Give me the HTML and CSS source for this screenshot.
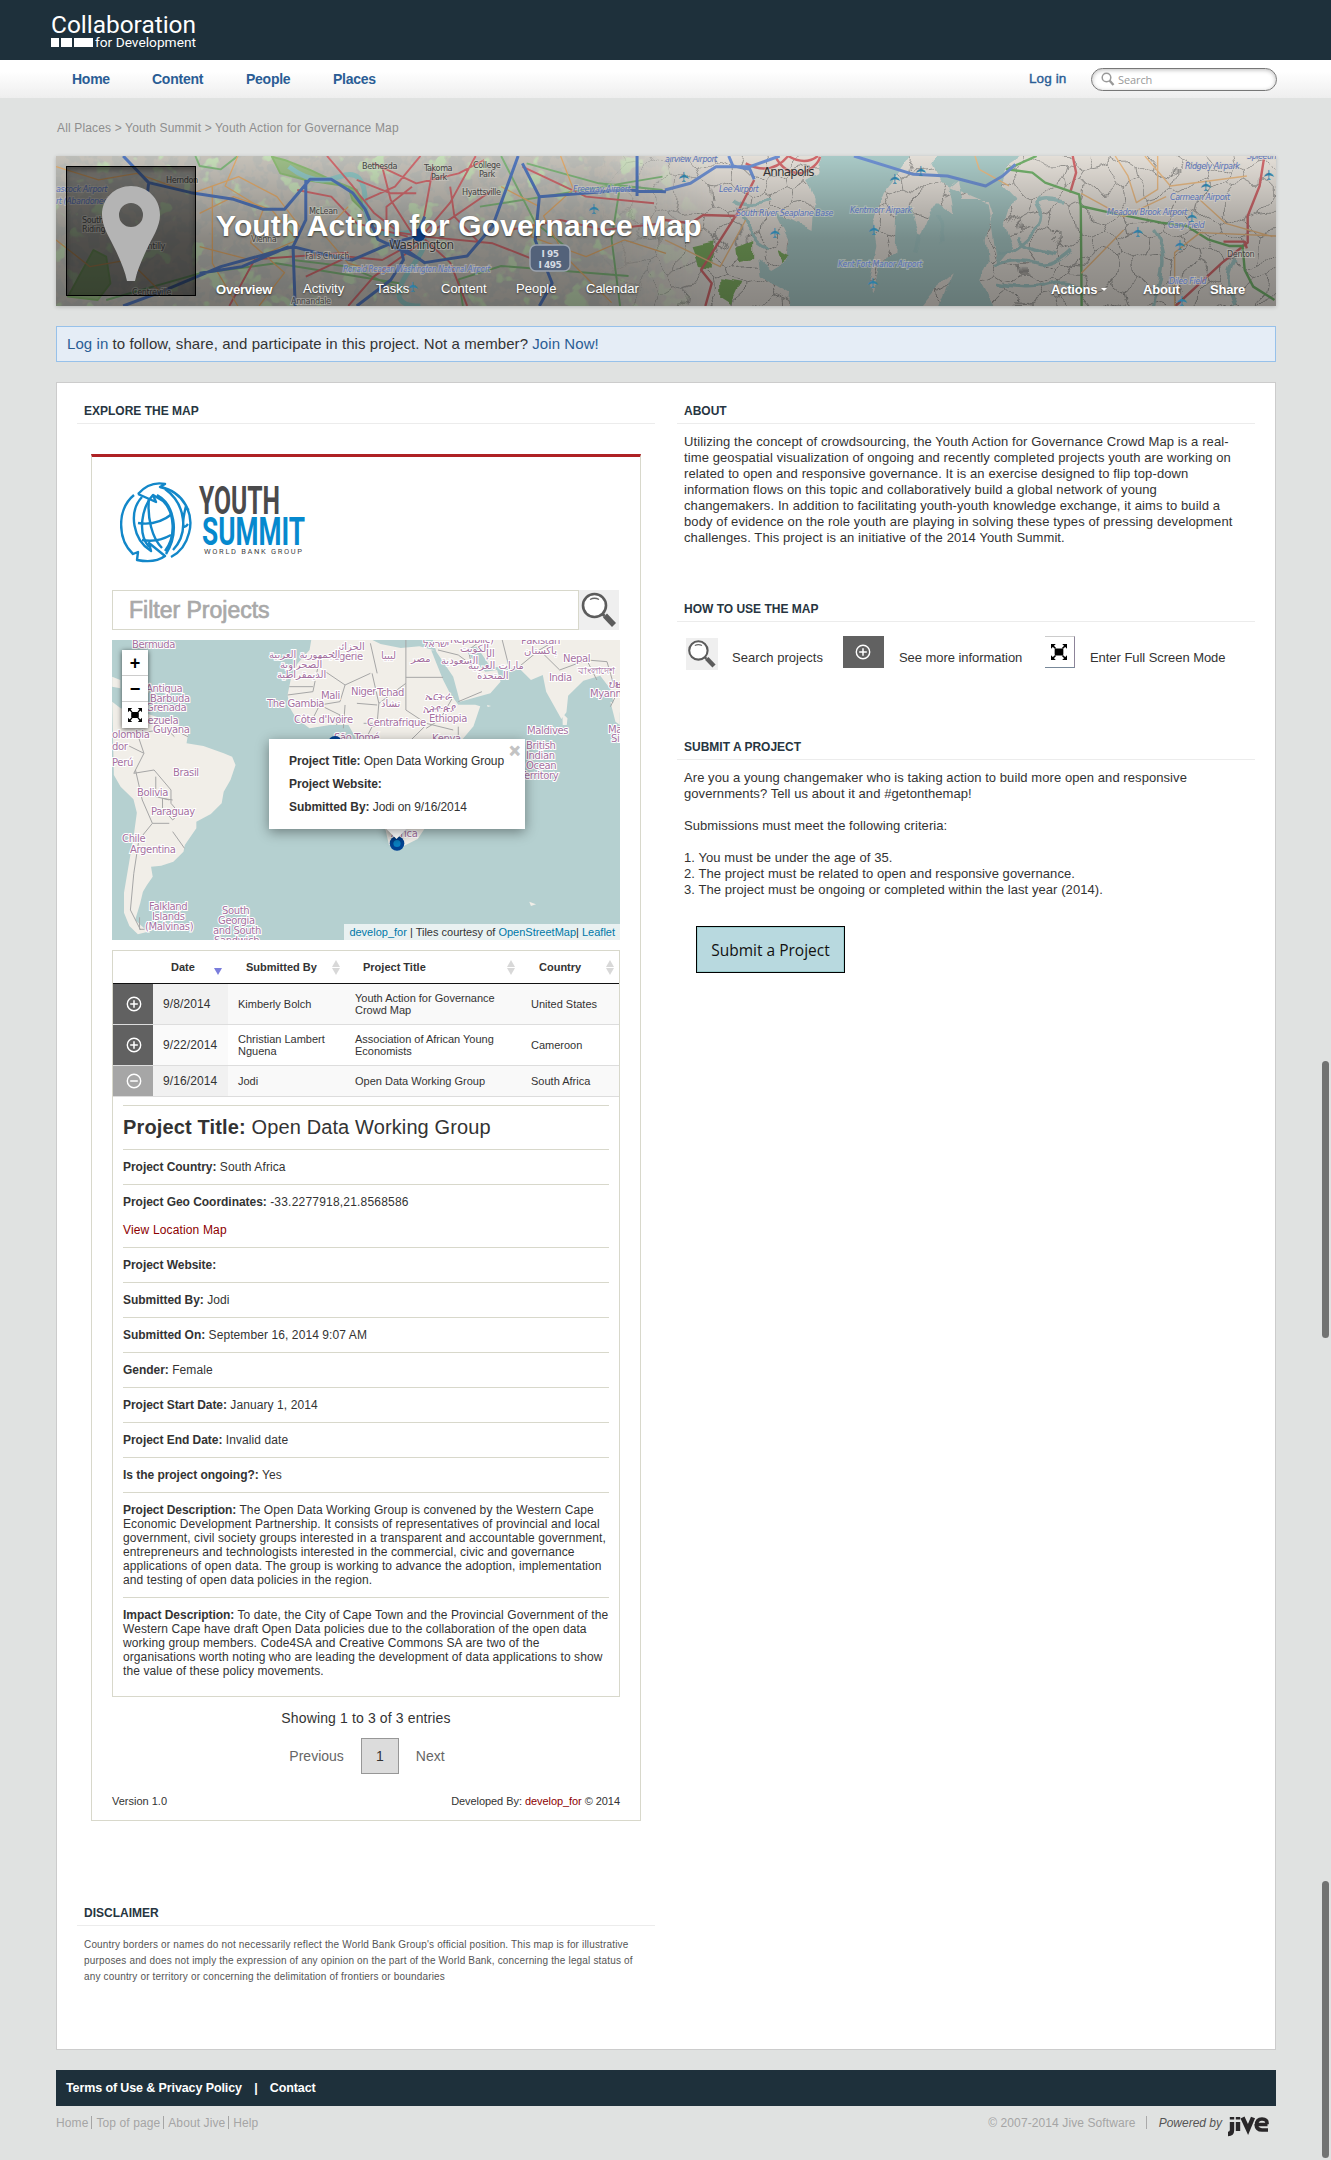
FILE: index.html
```html
<!DOCTYPE html>
<html lang="en">
<head>
<meta charset="utf-8">
<title>Youth Action for Governance Map</title>
<link rel="stylesheet" href="styles.css">
</head>
<body>
<svg class="defs" width="0" height="0">
  <defs>
    <symbol id="lens" viewBox="0 0 40 40">
      <rect width="40" height="40" fill="#efefef"/>
      <ellipse cx="15.5" cy="15.5" rx="11.5" ry="11.5" fill="#fff" stroke="#5c5c5c" stroke-width="2.6"/>
      <path d="M11 9.5q4.5-2.5 9 0" fill="none" stroke="#666" stroke-width="1.4"/>
      <path d="M23.5 24l2 2" stroke="#5c5c5c" stroke-width="3"/>
      <path d="M26 25.5l9 9.5" stroke="#5c5c5c" stroke-width="5.5"/>
    </symbol>
    <symbol id="full" viewBox="0 0 14 14">
      <rect x="3.200" y="4" width="7.600" height="6" rx="1"/>
      <path d="M0 0h4.200L0 4.200zM14 0H9.800L14 4.200zM0 14h4.200L0 9.800zM14 14H9.800L14 9.800z"/>
      <path d="M1 1l3 3M13 1l-3 3M1 13l3-3M13 13l-3-3" stroke="#000" stroke-width="1.300"/>
    </symbol>
    <symbol id="plus" viewBox="0 0 16 16">
      <circle cx="8" cy="8" r="6.700" fill="none" stroke="#fff" stroke-width="1.400"/>
      <path d="M4.200 8h7.600M8 4.200v7.600" stroke="#fff" stroke-width="1.500"/>
    </symbol>
    <symbol id="minus" viewBox="0 0 16 16">
      <circle cx="8" cy="8" r="6.700" fill="none" stroke="#fff" stroke-width="1.400"/>
      <path d="M4.200 8h7.600" stroke="#fff" stroke-width="1.500"/>
    </symbol>
  </defs>
</svg>

<header class="top">
  <svg width="146" height="38" viewBox="0 0 146 38" fill="#fff">
    <text x="0" y="20.500" font-family="Roboto" font-size="24" textLength="145" lengthAdjust="spacingAndGlyphs">Collaboration</text>
    <path d="M0 26h8v9H0zM10 26h11v9H10zM23 26h19v9H23z"/>
    <text x="44" y="34.500" font-family="Roboto" font-size="12.500" textLength="101" lengthAdjust="spacingAndGlyphs">for Development</text>
  </svg>
</header>
<nav class="nav">
  <a class="n1">Home</a><a class="n2">Content</a><a class="n3">People</a><a class="n4">Places</a>
  <a class="login">Log in</a>
  <div class="search">
    <svg width="14" height="14" viewBox="0 0 14 14" fill="none" stroke="#999"><circle cx="5.500" cy="5.500" r="4.300" stroke-width="1.500"/><path d="M8.500 8.500l4 4.500" stroke-width="2.400"/></svg>
    <span>Search</span>
  </div>
</nav>

<div class="page">
  <div class="crumbs">All Places &gt; Youth Summit &gt; Youth Action for Governance Map</div>

  <section class="banner">
    <svg class="banner-map" width="1220" height="150" viewBox="0 0 1220 150">
      <defs>
        <filter id="wobble" x="0" y="0" width="1" height="1"><feTurbulence type="fractalNoise" baseFrequency=".025" numOctaves="2" seed="4"/><feDisplacementMap in="SourceGraphic" scale="45" xChannelSelector="R" yChannelSelector="G"/></filter>
        <filter id="blocks" x="0" y="0" width="1" height="1"><feTurbulence type="fractalNoise" baseFrequency=".09" numOctaves="3" seed="9"/><feColorMatrix values="0 0 0 0 .5  0 0 0 0 .51  0 0 0 0 .48  9 0 0 0 -4.1"/></filter>
        <filter id="parks" x="0" y="0" width="1" height="1"><feTurbulence type="fractalNoise" baseFrequency=".045" numOctaves="3" seed="21"/><feColorMatrix values="0 0 0 0 .56  0 0 0 0 .72  0 0 0 0 .48  0 14 0 0 -8.6"/></filter>
        <filter id="bend" x="0" y="0" width="1" height="1"><feTurbulence type="fractalNoise" baseFrequency=".04" numOctaves="2" seed="7"/><feDisplacementMap in="SourceGraphic" scale="12" xChannelSelector="R" yChannelSelector="G"/></filter>
        <pattern id="streets" width="58" height="46" patternUnits="userSpaceOnUse">
          <path d="M0 10l12 4 8-6 14 9 10-5 14-2M12 14l-4 14 10 8 2 10M34 17l2 12 12 6 10-3M0 32l8-4M36 29l-14 8-4-1M44 12l3-12M20 8l-2-8M48 35l-1 11" fill="none" stroke="#9a9894" stroke-width="1"/>
        </pattern>
        <linearGradient id="shade" x1="0" y1="0" x2="0" y2="1"><stop offset="0" stop-color="#000" stop-opacity="0"/><stop offset=".55" stop-color="#000" stop-opacity=".3"/><stop offset="1" stop-color="#000" stop-opacity=".4"/></linearGradient>
        <linearGradient id="fade"><stop offset=".82" stop-color="#fff"/><stop offset="1" stop-color="#fff" stop-opacity="0"/></linearGradient>
        <mask id="m"><rect width="660" height="150" fill="url(#fade)"/></mask>
      </defs>
      <rect width="1220" height="150" fill="#e3ded7"/>
      <rect x="-30" y="-30" width="1280" height="210" fill="url(#streets)" filter="url(#wobble)"/>
      <g mask="url(#m)"><rect width="660" height="150" fill="#c5c1b9"/><rect width="660" height="150" filter="url(#blocks)"/><rect width="660" height="150" filter="url(#parks)"/></g>
      <!-- eastern half: bay, rivers, shore -->
      <g filter="url(#bend)">
      <rect width="1220" height="150" fill="none"/>
      <g transform="translate(609 -156) scale(.4247 .3333)">
        <path d="M370 448L360 520 330 540 350 600 345 690 300 660 260 640 290 720 290 780 250 810 220 780 225 830 290 880 285 938 590 938 640 860 680 820 640 938 780 938 740 840 760 780 755 720 770 640 760 600 700 600 690 540 670 560 680 640 640 600 620 640 600 710 575 620 545 640 540 760 500 800 490 880 478 860 500 740 490 660 515 580 550 520 590 448zM650 448h220l-60 50-20 60 30 40-20 80 20 60-40 60-20-190-110-60-20-50z" fill="#a9c9c6"/>
        <path d="M780 760q40 0 80-50t20-90 60-20M770 800q60-30 100-10t90-40M780 850q80 20 130 0t60 20M830 700q0 40 90 60M1340 780q-30 60 0 138M1150 690q30 50 20 120t-20 108M160 600q40 30 90 0M180 650q20 60 60 90M640 640l10 90M600 700l-10 60" fill="none" stroke="#a2c6c4" stroke-width="3.500" vector-effect="non-scaling-stroke"/>
        <path d="M65 745l50-15-10 70-25-5zM130 835l50 10-25 70-25-20zM170 740l40-20 0 60-35 10zM265 750l30 20-20 20z" fill="#7fae62"/>
      </g>
      </g>
      <g transform="translate(609 -156) scale(.4247 .3333)" fill="none" stroke-width="2.400" stroke-linejoin="round">
        <path vector-effect="non-scaling-stroke" stroke="#d0696c" d="M210 540L170 640 105 770 85 810 110 850 95 918M170 648L90 645 60 670 0 660M960 468l8 50-14 60M1410 478l-10 80-28 90 0 80-60 60-110 130M1315 725h50l5 20M190 490q60 40 100-22 40 30 70 0M260 470q20 50 60 50 40-20 45-50"/>
        <path vector-effect="non-scaling-stroke" stroke="#72b06b" d="M875 468l-70 40 60 10 30 30 80 35 4 35 2 300M978 618l70 20 120 30 60 10 50 40 50 20 35 0M1360 740l5 70 20 50 50 40"/>
        <path vector-effect="non-scaling-stroke" stroke="#e6b883" stroke-width="1.400" d="M730 468l10 40 70 50M1060 468l30 60 20 80 50-40 0-100M980 580l100 70 100-60M1200 918l0-160 60-60 180 10M980 820l100-130M0 720l130 80 60-140M1130 468l60 90 180-30M1260 600l60 70 110 40"/>
        <path vector-effect="non-scaling-stroke" stroke="#6d8fd0" stroke-width="3" d="M0 570l60-20 60-50 80 0 70-32M150 468l10 30 40 10 10 30M445 468l140 55 80 5 90 30 40-30 30-35"/>
      </g>
      <!-- western half: beltway and arterials -->
      <g transform="translate(-56 -156) scale(.4247 .3333)" fill="none" stroke-width="1.900" stroke-linejoin="round">
        <path stroke="#8cba74" fill="#9dbd88" vector-effect="non-scaling-stroke" d="M640 470l20 50 60 20 100 20 10 40 40 50-30-80-60-30-50-30-60-30zM160 890l60-140 30 20 10 80-30 50z"/>
        <path stroke="#8fc4c2" vector-effect="non-scaling-stroke" stroke-width="5" d="M680 500q60 60 120 30t60 80 90 90 20 100 20 118"/>
        <g stroke="#7fb57a"><path vector-effect="non-scaling-stroke" d="M460 468l10 30 50 10 40-40M690 780l130 20 110 60M1090 918l-10-80 100-40 300 30M250 900l220-80 180-30 290 60M1180 468l80 200 80 80M1240 490l170 60 150 20M1460 918l-20-200 20-160M1130 620l150-30 280-60"/></g>
        <g stroke="#d06a6e"><path vector-effect="non-scaling-stroke" d="M770 468l60 90 50 80 60 60 50 10M860 600l70-40 60-92M900 500l20 100 50 100M840 540l80 40 60 0M1020 500l-30 210M1120 468l-60 140-60 90M1160 570l-160 140 160 20 120 60M1000 710l-100 70-80-10-100 60M1100 918l-40-130-60-70M970 560l-60 60 0 60M1060 560l10 90 60 80M700 570l80 20 60 80 120 40M540 918l60-140 220-20M990 730l-110 100-60 88M880 490l100 60 100-30 60-40M1200 690l120-30 100 30 140-20M1230 500l150 90 160 20"/></g>
        <g stroke="#e2ab6c" stroke-width="1.300"><path vector-effect="non-scaling-stroke" d="M132 500l100 40 90-20 130 60 110-50 90 60 60 100M470 640l80-50 90 40 60 90-110 60-120-40M132 720l80 80 90-20 80 100M560 468l-30 90 90 70-30 100 80 90-60 100M1180 560l90 60-20 90 130 60 90-50 98 40M1320 468l30 100-70 80 50 120 110 140M500 560l0 230 60 128M820 620l-60 80 60 90 90 30"/></g>
        <g stroke="#5277bc" stroke-width="3"><path vector-effect="non-scaling-stroke" d="M290 468l60 80 100 30 100 20 70 30 50 0 60-90 50 0 50 40 30 50 30 90 100 60M720 540l0 120-30 80 5 178M690 740l60 20 80 20 90-50 60-20 20-60M470 820l100-20 110-60M350 548l-10 120-20 150M1220 468l-60 210-60 90-100 20-80-70M1230 490l40 100 200-20 98 5M1270 590l-10 130 40 130-30 68M690 740l-170 60-150 80-80 38M940 720l10 60-30 60-80 78M1500 468v120"/></g>
      </g>
      <rect width="1220" height="150" fill="url(#shade)"/>
      <g class="b-city">
        <text x="306" y="13">Bethesda</text><text x="368" y="15">Takoma</text><text x="375" y="24">Park</text><text x="417" y="12">College</text><text x="423" y="21">Park</text><text x="406" y="39">Hyattsville</text><text x="253" y="58">McLean</text><text x="195" y="86">Vienna</text><text x="249" y="103">Falls Church</text><text x="235" y="148">Annandale</text><text x="110" y="27">Herndon</text><text x="26" y="67">South</text><text x="26" y="76">Riding</text><text x="77" y="93">Chantilly</text><text x="76" y="139">Centreville</text><text x="1171" y="101">Denton</text>
      </g>
      <g class="b-big"><text x="333" y="93">Washington</text><text x="707" y="20" textLength="51">Annapolis</text></g>
      <g class="b-air"><text x="609" y="6">airview Airport</text><text x="663" y="36">Lee Airport</text><text x="680" y="60">South River Seaplane Base</text><text x="794" y="57">Kentmorr Airpark</text><text x="782" y="111">Kent Fort Manor Airport</text><text x="1129" y="13">Ridgely Airpark</text><text x="1114" y="44">Carmean Airport</text><text x="1051" y="59">Meadow Brook Airport</text><text x="1112" y="72">Gary Field</text><text x="1113" y="128">Dileo Field</text><text x="1191" y="3">Spleeting</text><text x="517" y="36">Freeway Airport</text><text x="287" y="116" textLength="147">Ronald Reagan Washington National Airport</text><text x="0" y="36">ascock Airport</text><text x="0" y="48">rt (Abandoned)</text></g>
      <g class="b-plane"><text transform="translate(633 21) rotate(-90)">✈</text><text transform="translate(724 77) rotate(-90)">✈</text><text transform="translate(823 74) rotate(-90)">✈</text><text transform="translate(844 23) rotate(-90)">✈</text><text transform="translate(870 15) rotate(-90)">✈</text><text transform="translate(822 127) rotate(-90)">✈</text><text transform="translate(1155 30) rotate(-90)">✈</text><text transform="translate(1141 61) rotate(-90)">✈</text><text transform="translate(1087 76) rotate(-90)">✈</text><text transform="translate(1129 89) rotate(-90)">✈</text><text transform="translate(1131 145) rotate(-90)">✈</text><text transform="translate(1218 19) rotate(-90)">✈</text><text transform="translate(543 53) rotate(-90)">✈</text><text transform="translate(362 131) rotate(-90)">✈</text></g>
      <circle cx="363" cy="79" r="6.500" fill="#0d3a7c"/>
      <rect x="474" y="89" width="40" height="26" rx="6" fill="#53627a" stroke="#9ba3ae" stroke-width="1.500"/>
      <text class="b-shield" x="494" y="101">I 95</text><text class="b-shield" x="494" y="112">I 495</text>
    </svg>
    <div class="avatar">
      <svg width="58" height="95" viewBox="0 0 58 95"><path fill="#b4b4b4" fill-rule="evenodd" d="M29 0C13 0 0 12 0 29c0 12 8 23 14 36 5 11 9 20 11 30h8c2-10 6-19 11-30 6-13 14-24 14-36C58 12 45 0 29 0zM29 17a12 12 0 1 1 0 24a12 12 0 1 1 0-24z"/></svg>
    </div>
    <div class="banner-text">
      <h1>Youth Action for Governance Map</h1>
      <div class="tabs">
        <b class="t1">Overview</b><span class="t2">Activity</span><span class="t3">Tasks</span><span class="t4">Content</span><span class="t5">People</span><span class="t6">Calendar</span>
        <b class="t7">Actions <i class="caret"></i></b><b class="t8">About</b><b class="t9">Share</b>
      </div>
    </div>
  </section>

  <div class="notice"><a>Log in</a> to follow, share, and participate in this project. Not a member? <a>Join Now!</a></div>

  <main class="main">
    <div class="col left">
      <section class="explore">
        <h2>Explore the map</h2>
        <div class="app">
          <svg class="logo" width="188" height="82" viewBox="0 0 188 82">
            <g fill="none" stroke="#1287c9" stroke-width="2.400" stroke-linejoin="round">
              <path d="M14 13C-3 27-3 57 13 72l5-2-1 8c10 2 20 2 28-4l-16-13 2 8C13 58 8 30 22 15"/>
              <path d="M18 12C26 3 35 0 45 2l-5 3c25 5 34 28 29 46-3 12-10 20-18 24"/>
              <path d="M18 12l18 8-3-7c-11 12-16 38-4 52"/>
              <path d="M37 13c17 9 23 37 9 59M33 13l10 6c12 12 13 36 2 50M29 16c-2 20 3 40 13 50"/>
              <path d="M45 7c21 15 24 44 8 61M66 24c-4 16-4 26 2 18M69 28l-4-2M18 41c12 2 24-1 34-9M22 58c10 2 20 0 29-5"/>
            </g>
            <g font-family="Roboto" font-weight="700">
              <text x="79" y="32" font-size="38" textLength="81" lengthAdjust="spacingAndGlyphs" fill="#4a4a4c">YOUTH</text>
              <text x="82" y="63" font-size="39" textLength="103" lengthAdjust="spacingAndGlyphs" fill="#0689ce">SUMMIT</text>
              <text x="84" y="71.500" font-size="7.500" font-weight="400" textLength="98" fill="#444">WORLD BANK GROUP</text>
            </g>
          </svg>
          <div class="filter"><div class="filter-input">Filter Projects</div><svg width="40" height="40"><use href="#lens"/></svg></div>

          <div class="map">
            <svg class="world" width="508" height="300" viewBox="0 0 508 300">
              <g transform="translate(-12 -10) scale(.338 .3333)" fill="#f1eee8">
                <path d="M36 215l25 20 60 10 60 20 60 25 20 20-5 30 50 8 60 22 25 10 10 25-15 45-20 35-6 35-32 32-43 23 0 20-34 50-4 20-30 30-36 12-30 3 5 30-17 25-12 20-8 35-15 50 38 35-30 8-25-25-16-40 0-60 15-90 15-90 8-60-10-40-38-38-20-35z"/>
                <path d="M625 30l-5 30-35 40-20 45-10 50 5 35 20 35 40 30 60-10 55 0 25 45 40 30v200l45 40 10 45 45 2 40-20 25-38 0-240 90 0 50-60 20-60-15-5-50 0-25-35-20-40-20-50-15-38 10 0-45-12-55 5-60-12-40-20z"/>
                <path d="M985 30l10 35 50 75 20 75 90-25 30-35-10-35-35 5-40-40-20-30 35-5 40 60 85 5 35 35 35-15 10 50 45 82 15-20 5-50 45-45 50-15 30 40 10 45 20 30 8-20V30z"/>
                <path d="M1368 250l15 15-2 20-12 0zM1510 215l15 60 13 10v-60z"/>
                <path d="M36 170l24 5v-25l-24-10zM1270 815l20 8-15 5zM1145 225l12 3-10 3zM130 895l25-5-8-10z"/>
                <g fill="none" stroke="#a6a6a6" stroke-width="1" ><path vector-effect="non-scaling-stroke" d="M645 110l-15 75-75 10M645 110l80 55 75-35M725 165l-15 50-60 10-20 40M905 30v130l-80 60-20-90M905 142h110M800 40l20 90M825 220l-5 60-40 0M905 160v80l60 40 80 20M725 225l-5 70M905 270l-100 20-20 40M1045 200l-40 70-40 25M1240 110l60-50 50-30M1300 60l60 60 80-30 60 5 20 70M1440 90l30 60M1000 60l60 15 40 30M1060 215l70-30M1510 230l20-40"/>
                <path vector-effect="non-scaling-stroke" d="M80 345l50 25-30 60 60-10 50 60 0 40 25 30-20 20-30-35 0-30 30 5M105 420l20 90 30 70-40 50-15 100-10 110 30 60M155 580l50 0M215 605l35 50M130 370l-20-60 100-15 50 25M200 300l20 20M117 862v36h15M1100 110l-10-50 40-30M1190 30l20 80M165 440l0 60 40 10M560 170h70M650 225l60 30-10 30M760 220l60 5M960 290l-40 40M1060 290v30"/></g>
              </g>
              <g class="country">
                <text x="20" y="8">Bermuda</text><text x="34" y="52">Antigua</text><text x="38" y="62">Barbuda</text><text x="34" y="71">Grenada</text><text x="18" y="84">Venezuela</text><text x="41" y="93">Guyana</text><text x="0" y="98">olombia</text><text x="0" y="110">dor</text><text x="0" y="126">Perú</text><text x="61" y="136">Brasil</text><text x="25" y="156">Bolivia</text><text x="39" y="175">Paraguay</text><text x="10" y="202">Chile</text><text x="18" y="213">Argentina</text>
                <text x="37" y="270">Falkland</text><text x="40" y="280">Islands</text><text x="33" y="290">(Malvinas)</text><text x="110" y="274">South</text><text x="106" y="284">Georgia</text><text x="101" y="294">and South</text><text x="102" y="304">Sandwich</text>
                <text x="218" y="20">Algérie</text><text x="224" y="10" direction="rtl" text-anchor="end">الجزائر</text><text x="157" y="18" direction="rtl" text-anchor="end">الجمهورية العربية</text><text x="168" y="28" direction="rtl" text-anchor="end">الصحراوية</text><text x="165" y="38" direction="rtl" text-anchor="end">الديمقراطية</text><text x="269" y="19" direction="rtl" text-anchor="end">ليبيا</text><text x="299" y="22" direction="rtl" text-anchor="end">مصر</text><text x="329" y="24" direction="rtl" text-anchor="end">السعودية</text><text x="348" y="12" direction="rtl" text-anchor="end">الكويت</text><text x="356" y="29" direction="rtl" text-anchor="end">مارات العربية</text><text x="374" y="17" direction="rtl" text-anchor="end">الإ</text><text x="365" y="39" direction="rtl" text-anchor="end">المتحدة</text><text x="412" y="14" direction="rtl" text-anchor="end">پاکستان</text>
                <text x="311" y="7">ישראל</text><text x="338" y="3">Republic)</text><text x="409" y="4">Pakistan</text><text x="451" y="22">Nepal</text><text x="466" y="34">বাংলাদেশ</text><text x="437" y="41">India</text><text x="497" y="48">ປະ</text><text x="478" y="57">Myanmar</text>
                <text x="209" y="59">Mali</text><text x="239" y="55">Niger</text><text x="265" y="56">Tchad</text><text x="269" y="67" direction="rtl" text-anchor="end">تشاد</text><text x="155" y="67">The Gambia</text><text x="182" y="83">Côte d'Ivoire</text><text x="255" y="86">Centrafrique</text><text x="222" y="101">São Tomé</text><text x="320" y="102">Kenya</text><text x="313" y="60">ኤርትራ</text><text x="311" y="72">ኢትዮጵያ</text><text x="317" y="82">Ethiopia</text>
                <text x="415" y="94">Maldives</text><text x="414" y="109">British</text><text x="414" y="119">Indian</text><text x="414" y="129">Ocean</text><text x="408" y="139">Territory</text><text x="496" y="93">Ma</text><text x="499" y="102">Sin</text><text x="279" y="197">Africa</text>
              </g>
              <circle cx="223" cy="103" r="7" fill="#004393"/>
              <circle cx="285" cy="203.500" r="7.300" fill="#004393"/><circle cx="285" cy="203.500" r="3.600" fill="#0a82c4"/>
            </svg>
            <div class="zoomer"><span>+</span><span>−</span><span><svg width="14" height="14"><use href="#full"/></svg></span></div>
            <div class="popup"><i class="tip"></i><div class="popup-box"><em>×</em><p><b>Project Title:</b> Open Data Working Group</p><p><b>Project Website:</b></p><p><b>Submitted By:</b> Jodi on 9/16/2014</p></div></div>
            <div class="attr"><a>develop_for</a> | Tiles courtesy of <a>OpenStreetMap</a>| <a>Leaflet</a></div>
          </div>

          <div class="table">
            <div class="row head"><span></span><span>Date<i class="desc"></i></span><span>Submitted By<i class="sort"></i></span><span>Project Title<i class="sort"></i></span><span>Country<i class="sort"></i></span></div>
            <div class="row odd"><span class="ic"><svg width="16" height="16"><use href="#plus"/></svg></span><span class="date">9/8/2014</span><span>Kimberly Bolch</span><span>Youth Action for Governance<br>Crowd Map</span><span>United States</span></div>
            <div class="row"><span class="ic"><svg width="16" height="16"><use href="#plus"/></svg></span><span class="date">9/22/2014</span><span>Christian Lambert<br>Nguena</span><span>Association of African Young<br>Economists</span><span>Cameroon</span></div>
            <div class="row odd short"><span class="ic open"><svg width="16" height="16"><use href="#minus"/></svg></span><span class="date">9/16/2014</span><span>Jodi</span><span>Open Data Working Group</span><span>South Africa</span></div>
            <div class="details">
              <h3><b>Project Title:</b> Open Data Working Group</h3>
              <p><b>Project Country:</b> South Africa</p>
              <p><b>Project Geo Coordinates:</b> <span class="geo">-33.2277918,21.8568586</span><a>View Location Map</a></p>
              <p><b>Project Website:</b></p>
              <p><b>Submitted By:</b> Jodi</p>
              <p><b>Submitted On:</b> September 16, 2014 9:07 AM</p>
              <p><b>Gender:</b> Female</p>
              <p><b>Project Start Date:</b> January 1, 2014</p>
              <p><b>Project End Date:</b> Invalid date</p>
              <p><b>Is the project ongoing?:</b> Yes</p>
              <p><b>Project Description:</b> The Open Data Working Group is convened by the Western Cape<br>Economic Development Partnership. It consists of representatives of provincial and local<br>government, civil society groups interested in a transparent and accountable government,<br>entrepreneurs and technologists interested in the commercial, civic and governance<br>applications of open data. The group is working to advance the adoption, implementation<br>and testing of open data policies in the region.</p>
              <p><b>Impact Description:</b> To date, the City of Cape Town and the Provincial Government of the<br>Western Cape have draft Open Data policies due to the collaboration of the open data<br>working group members. Code4SA and Creative Commons SA are two of the<br>organisations worth noting who are leading the development of data applications to show<br>the value of these policy movements.</p>
            </div>
          </div>
          <div class="info">Showing 1 to 3 of 3 entries</div>
          <div class="pager"><span>Previous</span><b>1</b><span>Next</span></div>
          <div class="credits"><span>Version 1.0</span><span>Developed By: <a>develop_for</a> © 2014</span></div>
        </div>
      </section>
      <section class="disclaimer">
        <h2>Disclaimer</h2>
        <p>Country borders or names do not necessarily reflect the World Bank Group's official position. This map is for illustrative<br>purposes and does not imply the expression of any opinion on the part of the World Bank, concerning the legal status of<br>any country or territory or concerning the delimitation of frontiers or boundaries</p>
      </section>
    </div>

    <div class="col right">
      <section class="about">
        <h2>About</h2>
        <p>Utilizing the concept of crowdsourcing, the Youth Action for Governance Crowd Map is a real-<br>time geospatial visualization of ongoing and recently completed projects youth are working on<br>related to open and responsive governance. It is an exercise designed to flip top-down<br>information flows on this topic and collaboratively build a global network of young<br>changemakers. In addition to facilitating youth-youth knowledge exchange, it aims to build a<br>body of evidence on the role youth are playing in solving these types of pressing development<br>challenges. This project is an initiative of the 2014 Youth Summit.</p>
      </section>
      <section class="howto">
        <h2>How to use the map</h2>
        <div class="keys">
          <svg class="k-lens" width="32" height="32"><use href="#lens"/></svg><span class="k1">Search projects</span>
          <span class="k-plus"><svg width="16" height="16"><use href="#plus"/></svg></span><span class="k2">See more information</span>
          <span class="k-full"><svg width="16" height="16"><use href="#full"/></svg></span><span>Enter Full Screen Mode</span>
        </div>
      </section>
      <section class="submit">
        <h2>Submit a project</h2>
        <p>Are you a young changemaker who is taking action to build more open and responsive<br>governments? Tell us about it and #getonthemap!<br><br>Submissions must meet the following criteria:<br><br>1. You must be under the age of 35.<br>2. The project must be related to open and responsive governance.<br>3. The project must be ongoing or completed within the last year (2014).</p>
        <a class="button">Submit a Project</a>
      </section>
    </div>
  </main>

  <div class="legal"><span>Terms of Use &amp; Privacy Policy</span><span class="bar">|</span><span>Contact</span></div>
  <footer class="foot">
    <div class="links">Home<i></i>Top of page<i></i>About Jive<i></i>Help</div>
    <div class="copy">© 2007-2014 Jive Software</div><i class="sep"></i><em>Powered by</em>
    <svg width="41" height="21" viewBox="0 0 41 21" fill="none" stroke="#292729" stroke-width="4.400"><path d="M4 6v8q0 4-4 4M10 6v9M10 1v2.500M4 1v2.500"/><path d="M14.500 1.500l5.500 12 5-12"/><path d="M39.500 8.500H28.500M28.500 9q0-6 5.500-6t5 5M28 8q.500 6 6 6h6" stroke-width="3.600"/></svg>
  </footer>
</div>
<i class="scroll s1"></i><i class="scroll s2"></i>
</body>
</html>
```

FILE: styles.css
```css
* { box-sizing: border-box; }
body { margin: 0; position: relative; height: 2160px; overflow: hidden; background: #e0e2e1; font-family: "Liberation Sans", Arial, sans-serif; font-size: 13px; color: #333; }
h1, h2, h3, p { margin: 0; font-weight: normal; }
i, em { font-style: normal; }
.defs { display: block; position: absolute; }
.top { height: 60px; padding: 12px 0 0 51px; background: #1e303b; }
.top svg { display: block; }
.nav { height: 38px; padding-left: 72px; display: flex; align-items: center; background: linear-gradient(#fff 30%, #eee); color: #315e91; font-weight: bold; font-size: 14px; letter-spacing: -.25px; }
.nav a { padding-bottom: 1px; }
.n1 { width: 80px; } .n2 { width: 94px; } .n3 { width: 87px; }
.login { margin-left: auto; width: 62px; font-size: 13.5px; font-weight: normal; letter-spacing: .1px; -webkit-text-stroke: .4px; }
.search { width: 186px; height: 23px; margin-right: 54px; border: 1px solid #777; border-radius: 12px; background: #fff; box-shadow: inset 0 1px 4px #bbb; display: flex; align-items: center; gap: 3px; padding-left: 9px; color: #999; font: 11px "Open Sans", sans-serif; letter-spacing: -.1px; }
.page { width: 1220px; margin-left: 56px; }
.crumbs { height: 58px; padding: 22px 0 0 1px; font-size: 12px; line-height: 16px; letter-spacing: .15px; color: #8e8e8e; }
.banner { position: relative; height: 150px; display: flex; padding: 10px; box-shadow: 0 1px 4px rgba(0,0,0,.2); color: #fff; text-shadow: 0 1px 2px rgba(0,0,0,.6); }
.banner-map { position: absolute; inset: 0; text-shadow: none; }
.b-city, .b-big, .b-air { stroke: rgba(215,212,205,.4); stroke-width: 2px; paint-order: stroke; }
.b-city { font: 9px "DejaVu Sans Condensed", "DejaVu Sans"; fill: #444; letter-spacing: -.4px; }
.b-big { font: 12px "DejaVu Sans"; fill: #333; letter-spacing: -.6px; }
.b-air { font: italic 8px "DejaVu Sans"; fill: #5872b8; letter-spacing: -.45px; }
.b-plane { font: 14px "DejaVu Sans"; fill: #2e7fa6; text-anchor: middle; }
.b-shield { font: bold 9px "DejaVu Sans"; fill: #d5dae2; text-anchor: middle; letter-spacing: -.5px; }
.avatar { position: relative; width: 130px; height: 130px; flex: none; border: 1px solid #000; background: rgba(0,0,0,.42); padding: 19px 0 0 35px; box-shadow: inset 0 3px 5px rgba(0,0,0,.35); }
.banner-text { position: relative; flex: 1; padding: 42px 0 0 20px; }
h1 { font-size: 30px; font-weight: bold; line-height: 36px; letter-spacing: .13px; white-space: nowrap; }
.tabs { display: flex; padding-top: 36px; line-height: 18px; white-space: nowrap; }
.t1 { width: 87px; padding-top: 1px; } .t2 { width: 73px; } .t3 { width: 65px; } .t4 { width: 75px; } .t5 { width: 70px; }
.t7 { margin-left: auto; width: 92px; } .t8 { width: 67px; } .t9 { width: 56px; }
.t1, .t7, .t8, .t9 { padding-top: 1px; letter-spacing: -.2px; }
.caret { display: inline-block; border: 3px solid transparent; border-top-color: #fff; border-bottom: 0; vertical-align: 3px; }
.notice { height: 36px; margin-top: 20px; padding-left: 10px; border: 1px solid #97c1ea; background: #e5edf6; color: #333; font-size: 15px; letter-spacing: .07px; line-height: 33px; }
a { color: #2a5d95; text-decoration: none; }
.main { height: 1668px; margin-top: 20px; border: 1px solid #ccc; background: #fff; display: grid; grid-template-columns: 578px 578px; column-gap: 22px; padding: 20px 0 0 20px; }
h2 { height: 21px; padding-left: 7px; border-bottom: 1px solid #ececec; font-size: 12px; line-height: 16px; font-weight: bold; text-transform: uppercase; color: #273541; }
.explore { height: 1502px; }
.app { width: 550px; height: 1367px; margin: 30px 0 0 14px; border: 1px solid #d8d8cb; border-top: 3px solid #ae2124; padding: 25px 20px 0; }
.logo { display: block; margin-left: 8px; }
.filter { display: flex; margin-top: 26px; height: 40px; }
.filter-input { width: 467px; border: 1px solid #d8d8cb; padding-left: 16px; font-size: 23px; line-height: 38px; color: #a9a9a9; -webkit-text-stroke: .7px; }
.map { position: relative; height: 300px; margin-top: 10px; overflow: hidden; background: #b5d0d0; font-size: 12px; }
.world { display: block; }
.country { font: 10px "DejaVu Sans"; fill: #a5719f; stroke: #fff; stroke-width: 2px; paint-order: stroke; letter-spacing: -.35px; }
.zoomer { position: absolute; left: 10px; top: 10px; width: 26px; background: #fff; box-shadow: 0 1px 5px rgba(0,0,0,.65); font: bold 18px/27px "Liberation Sans"; color: #000; text-align: center; }
.zoomer span { display: block; height: 26px; border-bottom: 1px solid #ccc; }
.zoomer span:last-child { border: 0; }
.zoomer svg { margin-top: 6px; display: inline-block; vertical-align: top; }
.popup { position: absolute; left: 157px; top: 99px; width: 256px; }
.popup-box { position: relative; height: 90px; padding: 15px 20px; background: #fff; box-shadow: 0 3px 12px rgba(0,0,0,.4); letter-spacing: -.07px; }
.popup-box p { line-height: 15px; margin-bottom: 8px; white-space: nowrap; }
.popup-box em { position: absolute; right: 5px; top: 2px; font: bold 18px/20px "Liberation Sans"; color: #c3c3c3; -webkit-text-stroke: 1px; }
.tip { position: absolute; left: 120px; top: 82px; width: 15px; height: 15px; background: #fff; transform: rotate(45deg); box-shadow: 0 3px 8px rgba(0,0,0,.4); }
.attr { position: absolute; right: 0; bottom: 0; height: 16px; padding: 0 5px; line-height: 16px; background: rgba(255,255,255,.7); font-size: 11px; white-space: nowrap; }
.attr a { color: #0078a8; }
.table { height: 747px; margin-top: 10px; border: 1px solid #d8d8cb; }
.row { display: grid; grid-template-columns: 40px 75px 117px 176px 1fr; height: 41px; border-bottom: 1px solid #ddd; font-size: 11px; line-height: 12px; white-space: nowrap; }
.row > span { display: flex; align-items: center; padding-left: 10px; }
.row.head { height: 33px; border-bottom: 1px solid #111; font-weight: bold; }
.row.head > span { position: relative; padding: 0 0 1px 18px; }
.odd { background: #f9f9f9; }
.short { height: 31px; }
.row .date { font-size: 12px; letter-spacing: .1px; background: #fafafa; }
.odd .date { background: #f1f1f1; }
.row .ic { background: #616161; padding: 0 0 0 13px; }
.row .ic.open { background: #a6a6a6; }
.desc { position: absolute; left: 61px; top: 17px; border: 4px solid transparent; border-top: 7px solid #7a7ddc; border-bottom: 0; }
.sort { position: absolute; right: 5px; top: 9px; width: 8px; height: 15px; background: linear-gradient(#d8d8d8 46%, #fff 46% 54%, #d8d8d8 54%); clip-path: polygon(50% 0, 100% 46%, 100% 54%, 50% 100%, 0 54%, 0 46%); }
.row.head > span:nth-child(4) .sort { right: 6px; }
.details { padding: 8px 10px 0; font-size: 12px; line-height: 14px; letter-spacing: .09px; white-space: nowrap; }
.details b { letter-spacing: -.04px; }
.details h3 { height: 44px; border-top: 1px solid #d8d8cb; font-size: 20px; line-height: 43px; letter-spacing: .12px; }
.details h3 b { letter-spacing: .15px; }
.details p { border-top: 1px solid #d8d8cb; padding: 10px 0; }
.details a { display: block; margin-top: 14px; color: #8c0000; letter-spacing: .15px; }
.geo { letter-spacing: .2px; }
.info { text-align: center; font-size: 14px; line-height: 16px; margin-top: 13px; letter-spacing: .13px; }
.pager { display: flex; justify-content: center; align-items: center; gap: 17px; margin-top: 12px; padding-left: 2px; height: 36px; font-size: 14px; color: #666; }
.pager b { width: 38px; height: 36px; border: 1px solid #979797; background: #dcdcdc; line-height: 34px; text-align: center; font-weight: normal; color: #333; }
.credits { display: flex; justify-content: space-between; margin-top: 20px; font-size: 11px; line-height: 15px; }
.credits span:last-child { letter-spacing: -.06px; }
.credits a { color: #8c0000; }
.disclaimer p { padding: 11px 0 0 7px; font-size: 10px; line-height: 16px; letter-spacing: .165px; color: #555; white-space: nowrap; }
.right p { padding: 10px 0 0 7px; line-height: 16px; letter-spacing: .1px; white-space: nowrap; }
.right .submit p { letter-spacing: .07px; }
.about { height: 198px; }
.howto { height: 138px; }
.keys { display: flex; align-items: flex-start; padding: 14px 0 0 9px; line-height: 16px; white-space: nowrap; }
.keys > span { padding-top: 7px; margin-top: 7px; letter-spacing: -.05px; }
.keys > svg { margin-top: 2px; margin-right: 14px; flex: none; }
.keys .k1 { width: 111px; letter-spacing: .05px; } .keys .k2 { width: 146px; }
.keys .k-plus, .keys .k-full { flex: none; margin: 0 15px 0 0; width: 41px; height: 32px; padding: 8px 0 0 12px; background: #616161; }
.keys .k-full { width: 30px; padding: 7px 0 0 6px; background: #fff; border-right: 1px solid #8d8499; border-bottom: 1px solid #789; border-top: 1px solid #ccc; }
.button { display: flex; justify-content: center; align-items: center; width: 149px; height: 47px; margin: 28px 0 0 19px; border: 1px solid #000; background: #b8d9df; box-shadow: inset 0 0 0 1px #9cc; color: #111; font: 15.5px "Open Sans", sans-serif; white-space: nowrap; }
.legal { display: flex; height: 36px; margin-top: 20px; padding-left: 10px; background: #1e303b; color: #fff; font-weight: bold; font-size: 12.5px; line-height: 36px; letter-spacing: -.11px; white-space: nowrap; }
.bar { width: 28px; text-align: center; }
.foot { display: flex; padding-top: 9px; height: 40px; font-size: 12px; line-height: 16px; letter-spacing: .1px; color: #a5a5a5; white-space: nowrap; }
.links { display: flex; margin-right: auto; }
.links i { width: 1px; height: 13px; background: #a5a5a5; margin: 1px 4px 0 3px; }
.sep { width: 1px; height: 13px; margin: 1px 12px 0 10px; background: #aaa; }
.foot em { font-style: italic; color: #555; margin-right: 6px; letter-spacing: 0; }
.foot svg { margin: 1px 7px 0 0; }
.scroll { position: absolute; right: 2px; width: 7px; border-radius: 4px; background: #727372; }
.s1 { top: 1061px; height: 277px; } .s2 { top: 1881px; height: 277px; }
```
